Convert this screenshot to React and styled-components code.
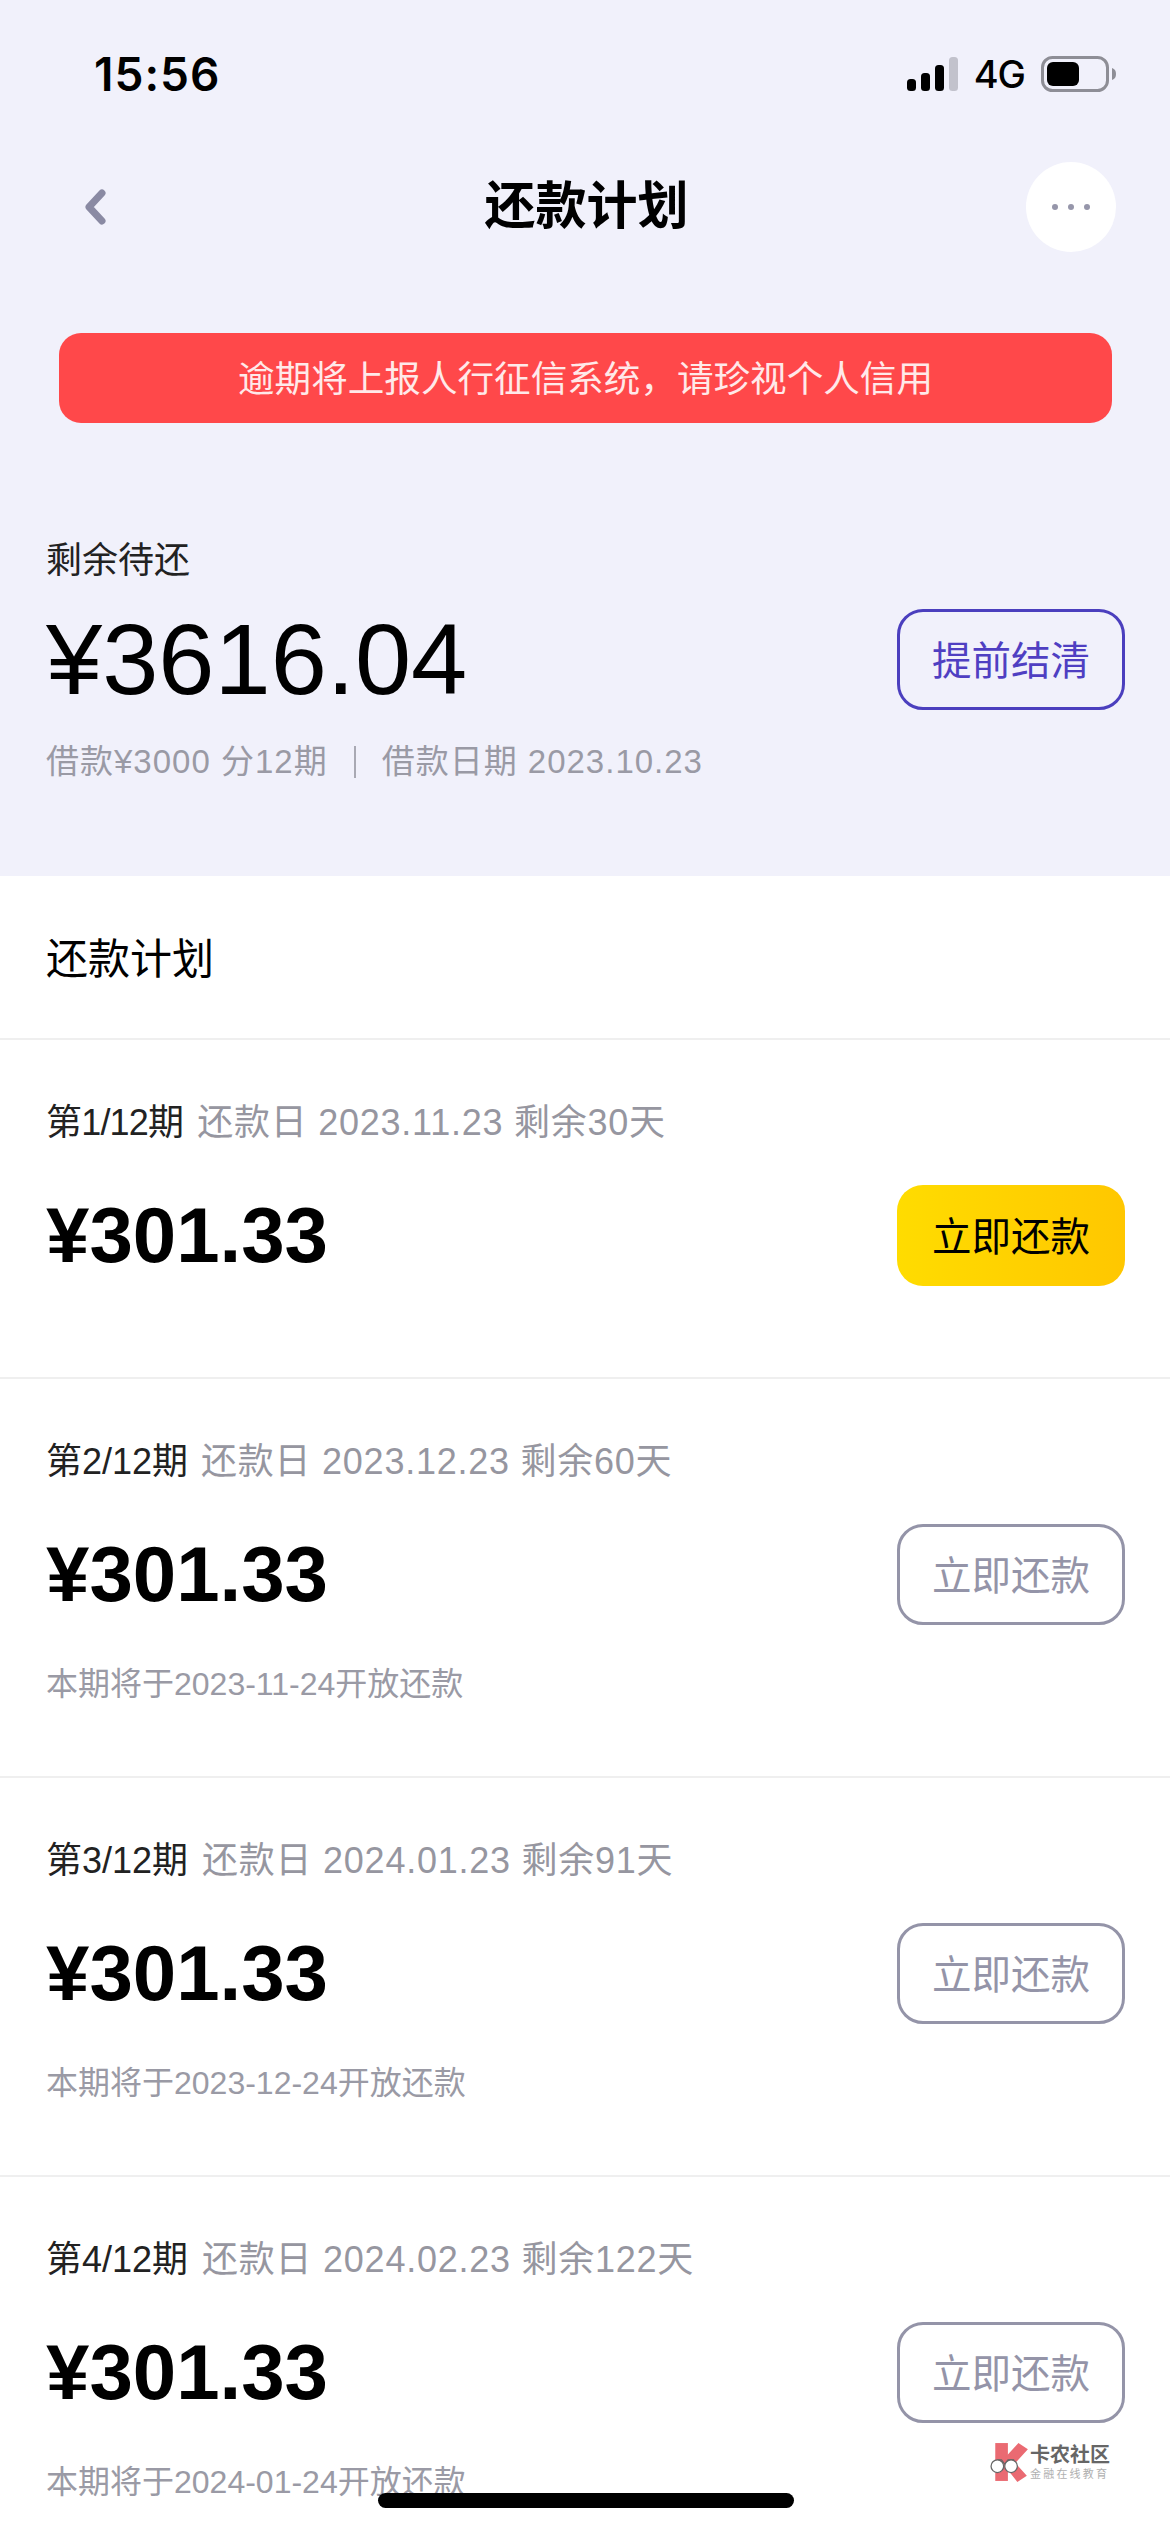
import React from "react";
import styled, { createGlobalStyle } from "styled-components";

const GlobalStyle = createGlobalStyle`
  html, body {
    margin: 0;
    padding: 0;
    background: #fff;
  }
`;

const fontStack = `"Liberation Sans", "Noto Sans CJK SC", sans-serif`;

const Page = styled.div`
  position: relative;
  width: 1170px;
  height: 2532px;
  overflow: hidden;
  background: #fff;
  font-family: ${fontStack};
  color: #000;
`;

const Hero = styled.header`
  height: 876px;
  background: #f1f1fb;
`;

const StatusBar = styled.div`
  display: flex;
  align-items: center;
  justify-content: space-between;
  height: 148px;
  padding: 0 54px 0 94px;
  box-sizing: border-box;
`;

const Time = styled.span`
  font-family: Inter, sans-serif;
  font-size: 46px;
  font-weight: 600;
  letter-spacing: 1px;
`;

const StatusIcons = styled.div`
  display: flex;
  align-items: center;
  gap: 16px;
`;

const NetLabel = styled.span`
  font-family: Inter, sans-serif;
  font-size: 38px;
  font-weight: 500;
  letter-spacing: -1px;
`;

const Nav = styled.nav`
  display: flex;
  align-items: center;
  justify-content: space-between;
  height: 90px;
  margin-top: 14px;
  padding: 0 54px 0 83px;
`;

const NavTitle = styled.h1`
  margin: 0 0 0 40px;
  font-size: 51px;
  font-weight: 700;
  line-height: 90px;
`;

const MoreButton = styled.div`
  display: flex;
  align-items: center;
  justify-content: center;
  gap: 10px;
  width: 90px;
  height: 90px;
  border-radius: 50%;
  background: #fff;
`;

const Dot = styled.i`
  width: 6px;
  height: 6px;
  border-radius: 50%;
  background: #9696aa;
`;

const Banner = styled.div`
  display: flex;
  align-items: center;
  justify-content: center;
  height: 90px;
  margin: 81px 58px 0 59px;
  padding-bottom: 4px;
  box-sizing: border-box;
  border-radius: 22px;
  background: #ff484a;
  color: #ffe9e9;
  font-size: 36.6px;
`;

const Balance = styled.section`
  padding: 118px 45px 0 46px;
`;

const BalanceLabel = styled.div`
  font-size: 36px;
  line-height: 40px;
  color: #222;
`;

const BalanceRow = styled.div`
  display: flex;
  align-items: center;
  justify-content: space-between;
  margin-top: 28px;
`;

const BalanceAmount = styled.div`
  font-size: 101px;
  line-height: 101px;
`;

const LoanInfo = styled.div`
  display: flex;
  align-items: center;
  margin-top: 32px;
  font-size: 33px;
  line-height: 40px;
  letter-spacing: 1px;
  color: #9a9aa5;
`;

const InfoDivider = styled.i`
  width: 2px;
  height: 32px;
  margin: 0 26px;
  background: #a9a9b3;
`;

const ActionButton = styled.div`
  display: flex;
  align-items: center;
  justify-content: center;
  width: 228px;
  height: 101px;
  padding-bottom: 5px;
  box-sizing: border-box;
  border-radius: 26px;
  font-size: 39.5px;
  border: ${(p) =>
    p.$variant === "primary"
      ? "none"
      : p.$variant === "accent"
      ? "3px solid #4b3fbe"
      : "3px solid #9494a8"};
  background: ${(p) =>
    p.$variant === "primary"
      ? "linear-gradient(90deg, #ffdc00, #ffc700)"
      : "transparent"};
  color: ${(p) =>
    p.$variant === "primary"
      ? "#000"
      : p.$variant === "accent"
      ? "#4f3fc2"
      : "#9494a8"};
`;

const PlanHeading = styled.h2`
  display: flex;
  align-items: center;
  height: 158px;
  margin: 0;
  padding: 0 0 4px 46px;
  border-bottom: 2px solid #efefef;
  font-size: 42px;
  font-weight: 400;
`;

const Row = styled.article`
  padding: 61px 45px ${(p) => (p.$hasNote ? "73px" : "91px")} 46px;
  border-bottom: 2px solid #efefef;
`;

const RowTitle = styled.div`
  display: flex;
  align-items: center;
  height: 36px;
  padding-bottom: 4px;
  font-size: 36px;
  white-space: pre;
  color: #222;
`;

const RowPeriod = styled.span`
  letter-spacing: ${(p) => (p.$tight ? "-0.8px" : "0")};
`;

const RowDue = styled.span`
  margin-left: ${(p) => p.$gap}px;
  letter-spacing: 0.75px;
  color: #9696a0;
`;

const RowMain = styled.div`
  display: flex;
  align-items: center;
  justify-content: space-between;
  margin-top: 44px;
`;

const RowAmount = styled.div`
  font-size: 78px;
  font-weight: 700;
  line-height: 101px;
`;

const RowNote = styled.div`
  margin-top: 38px;
  padding-top: 2px;
  font-size: 32px;
  line-height: 38px;
  color: #9a9aa5;
`;

const Watermark = styled.div`
  position: absolute;
  left: 990px;
  top: 2442px;
  display: flex;
  align-items: center;
`;

const WatermarkText = styled.div`
  display: flex;
  flex-direction: column;
  gap: 1px;
`;

const WatermarkName = styled.span`
  font-size: 20px;
  font-weight: 700;
  line-height: 23px;
  color: #666;
`;

const WatermarkTag = styled.span`
  font-size: 11px;
  line-height: 13px;
  letter-spacing: 2.2px;
  color: #b0b0b0;
`;

const HomeIndicator = styled.div`
  position: absolute;
  left: 378px;
  top: 2493px;
  width: 416px;
  height: 15px;
  border-radius: 8px;
  background: #000;
`;

const SignalIcon = () => (
  <svg width="51" height="34" viewBox="0 0 51 34">
    <rect x="0" y="22" width="9" height="12" rx="3.5" fill="#000" />
    <rect x="14" y="16" width="9" height="18" rx="3.5" fill="#000" />
    <rect x="28" y="8" width="9" height="26" rx="3.5" fill="#000" />
    <rect x="42" y="0" width="9" height="34" rx="3.5" fill="#c2c2cc" />
  </svg>
);

const BatteryIcon = () => (
  <svg width="75" height="36" viewBox="0 0 75 36">
    <rect x="1.5" y="1.5" width="65" height="33" rx="10" fill="none" stroke="#8e8e96" strokeWidth="3" />
    <rect x="6" y="6" width="32" height="24" rx="6" fill="#000" />
    <path d="M71 12c3 1 4 3 4 6s-1 5-4 6z" fill="#8e8e96" />
  </svg>
);

const BackIcon = () => (
  <svg width="24" height="36" viewBox="0 0 24 36">
    <path d="M19 4L6 18l13 14" fill="none" stroke="#8a8aa3" strokeWidth="7" strokeLinecap="round" strokeLinejoin="round" />
  </svg>
);

const WatermarkMark = () => (
  <svg width="40" height="40" viewBox="0 0 38 38">
    <path d="M5 1h12v36H5z" fill="#ea6a72" />
    <path d="M15 14L27 1l9 6-12 13 11 12-9 6-11-14z" fill="#ea6a72" />
    <path d="M7 17h4l3 4 3-4h6" fill="none" stroke="#666" strokeWidth="1" />
    <circle cx="7" cy="23" r="6" fill="#fff" stroke="#666" strokeWidth="1.2" />
    <circle cx="20" cy="23" r="6" fill="#fff" stroke="#666" strokeWidth="1.2" />
  </svg>
);

const periods = [
  { title: "第1/12期", tight: true, gap: 14, due: "还款日 2023.11.23 剩余30天" },
  { title: "第2/12期", gap: 13, due: "还款日 2023.12.23 剩余60天", note: "本期将于2023-11-24开放还款" },
  { title: "第3/12期", gap: 14, due: "还款日 2024.01.23 剩余91天", note: "本期将于2023-12-24开放还款" },
  { title: "第4/12期", gap: 14, due: "还款日 2024.02.23 剩余122天", note: "本期将于2024-01-24开放还款" },
];

const App = () => {
  return (
    <Page>
      <GlobalStyle />
      <Hero>
        <StatusBar>
          <Time>15:56</Time>
          <StatusIcons>
            <SignalIcon />
            <NetLabel>4G</NetLabel>
            <BatteryIcon />
          </StatusIcons>
        </StatusBar>
        <Nav>
          <BackIcon />
          <NavTitle>还款计划</NavTitle>
          <MoreButton>
            <Dot />
            <Dot />
            <Dot />
          </MoreButton>
        </Nav>
        <Banner>逾期将上报人行征信系统，请珍视个人信用</Banner>
        <Balance>
          <BalanceLabel>剩余待还</BalanceLabel>
          <BalanceRow>
            <BalanceAmount>¥3616.04</BalanceAmount>
            <ActionButton $variant="accent">提前结清</ActionButton>
          </BalanceRow>
          <LoanInfo>
            借款¥3000 分12期
            <InfoDivider />
            借款日期 2023.10.23
          </LoanInfo>
        </Balance>
      </Hero>
      <PlanHeading>还款计划</PlanHeading>
      {periods.map((p) => (
        <Row key={p.title} $hasNote={!!p.note}>
          <RowTitle>
            <RowPeriod $tight={p.tight}>{p.title}</RowPeriod>
            <RowDue $gap={p.gap}>{p.due}</RowDue>
          </RowTitle>
          <RowMain>
            <RowAmount>¥301.33</RowAmount>
            <ActionButton $variant={p.tight ? "primary" : "muted"}>立即还款</ActionButton>
          </RowMain>
          {p.note && <RowNote>{p.note}</RowNote>}
        </Row>
      ))}
      <Watermark>
        <WatermarkMark />
        <WatermarkText>
          <WatermarkName>卡农社区</WatermarkName>
          <WatermarkTag>金融在线教育</WatermarkTag>
        </WatermarkText>
      </Watermark>
      <HomeIndicator />
    </Page>
  );
};

export default App;
